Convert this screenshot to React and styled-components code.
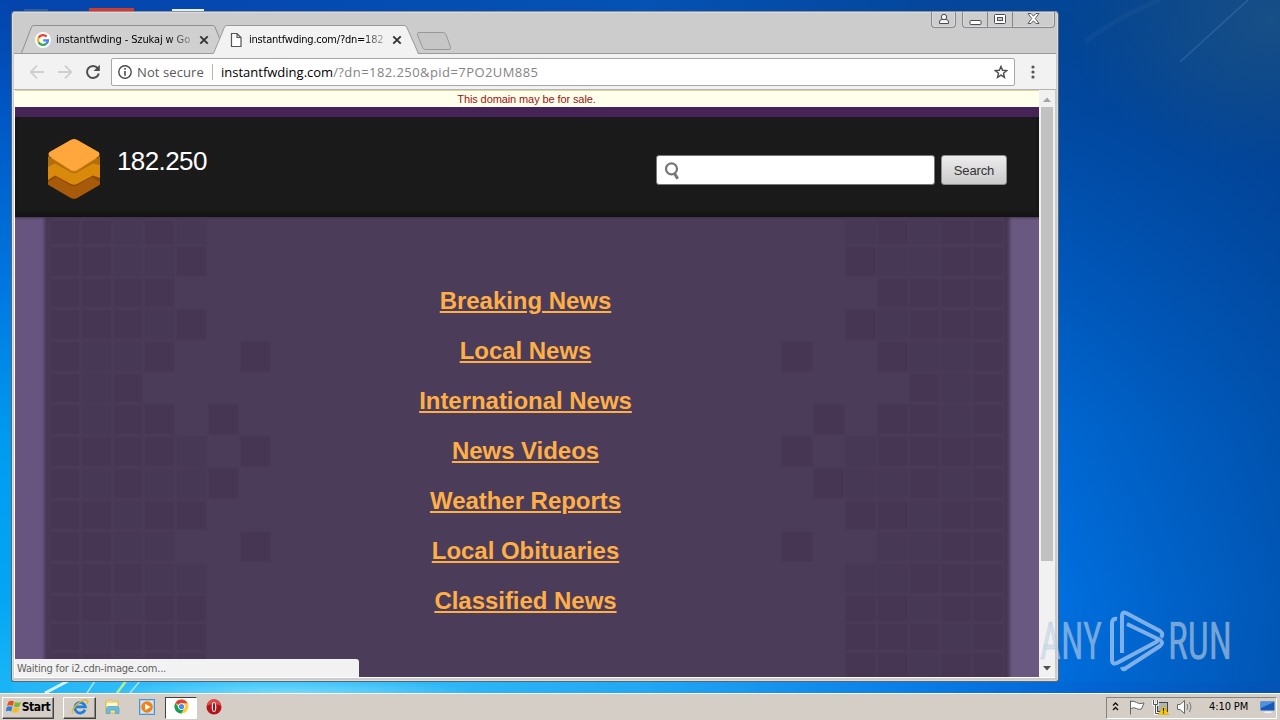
import React from 'react'
import styled, { createGlobalStyle } from 'styled-components';

const GlobalStyle = createGlobalStyle`
    * {
        box-sizing: border-box;
    }
    body {
        margin: 0;
        overflow: hidden;
    }
    svg {
        display: block;
        flex-shrink: 0;
    }
`

const tahoma = '"DejaVu Sans Condensed", "DejaVu Sans", sans-serif'
const arial = '"Liberation Sans", Arial, sans-serif'

const Desktop = styled.div`
    position: relative;
    display: flex;
    flex-direction: column;
    width: 1280px;
    height: 720px;
    overflow: hidden;
    font-family: ${tahoma};
    font-stretch: condensed;
    background:
        linear-gradient(to bottom, #0444ad 0, #0058c4 120px, #0078e0 290px, #009bf0 440px, #04a6f4 600px, #18b4f6 682px) 0 0 / 12px 693px no-repeat,
        linear-gradient(to right, #22b4f6 0, #38c4fa 20%, #22a8f4 50%, #0a80e8 70%, #0264d2 85%, #0353b4 100%) 0 682px / 1280px 11px no-repeat,
        linear-gradient(to right, #0444ad 0, #0452b4 50%, #04469a 75%, #04469a00 90%) 0 0 / 1280px 11px no-repeat,
        radial-gradient(ellipse 200px 150px at 1270px 20px, #174f86 0, #174f8600 100%),
        linear-gradient(to left, #02388270 0, #02388200 220px),
        linear-gradient(to bottom, #034592 0, #0148a0 110px, #0056b8 260px, #0066d0 430px, #006fde 600px, #006cda 693px);
`

const Wallpaper = styled.svg`
    position: absolute;
    left: 0;
    top: 0;
`

const Main = styled.main`
    position: relative;
    height: 693px;
    padding: 11px 0 0 11px;
`

const Window = styled.section`
    position: relative;
    display: flex;
    flex-direction: column;
    width: 1048px;
    height: 671px;
    padding: 0 3px 3px;
    border: 1px solid #5c6470;
    border-top-color: #8e9299;
    border-radius: 4px 4px 3px 3px;
    background: #ccc;
    box-shadow: inset 0 0 0 1px #dcdcdc;
`

const TitleBar = styled.div`
    display: flex;
    justify-content: space-between;
    height: 41px;
    padding-left: 6px;
`

const Tabs = styled.div`
    display: flex;
    padding-top: 13px;
`

const Tab = styled.div`
    position: relative;
    display: flex;
    align-items: center;
    width: ${p => p.$active ? 206 : 201}px;
    height: 29px;
    margin-left: ${p => p.$active ? -9 : 0}px;
    padding-left: ${p => p.$active ? 15 : 14}px;
    z-index: ${p => p.$active ? 1 : 0};
    > * {
        position: relative;
    }
`

const TabShape = styled.svg`
    && {
        position: absolute;
        left: 0;
        top: 0;
    }
`

const TabTitle = styled.span`
    width: 135px;
    margin: 0 8px 0 5px;
    overflow: hidden;
    white-space: nowrap;
    font-size: 11px;
    line-height: 16px;
    letter-spacing: ${p => p.$spacing}px;
    color: #000;
    mask-image: linear-gradient(to right, #000 112px, #0004 135px);
`

const NewTab = styled.svg`
    margin: 7px 0 0 -3px;
`

const Controls = styled.div`
    display: flex;
    align-items: flex-start;
`

const ControlGroup = styled.div`
    display: flex;
    height: 16px;
    margin-right: ${p => p.$gap || 0}px;
    border: 1px solid #85888c;
    border-top: 0;
    border-radius: 0 0 4px 4px;
    background: #cdcdcd;
    box-shadow: inset 0 0 0 1px #dadada;
`

const Control = styled.span`
    display: grid;
    place-items: center;
    width: ${p => p.$width}px;
    padding-bottom: 2px;
    & + & {
        border-left: 1px solid #85888c;
    }
`

const Toolbar = styled.div`
    display: flex;
    align-items: center;
    height: 38px;
    margin: 0 -1px 0 -1px;
    padding: 0 9px 0 15px;
    border-top: 1px solid #9a9a9a;
    border-bottom: 1px solid #b5b4ae;
    background: #f2f2f2;
`

const NavIcons = styled.div`
    display: flex;
    gap: 12px;
    width: 82px;
`

const AddressBar = styled.div`
    display: flex;
    align-items: center;
    width: 904px;
    height: 28px;
    padding: 0 6px;
    border: 1px solid #a5a7ab;
    border-radius: 2px;
    background: #fff;
    font-family: "Open Sans", "Noto Sans", sans-serif;
    font-size: 13px;
    font-stretch: normal;
    color: #000;
`

const Secure = styled.span`
    width: 76px;
    margin-left: 5px;
    border-right: 1px solid #b4b4b4;
    line-height: 16px;
    letter-spacing: .1px;
    white-space: nowrap;
    color: #5a5a5a;
`

const Url = styled.span`
    flex: 1;
    padding-left: 8px;
    span {
        letter-spacing: .43px;
        color: #848484;
    }
`

const MenuButton = styled.svg`
    margin-left: 16px;
`

const Viewport = styled.div`
    position: relative;
    display: flex;
    height: 588px;
    margin-left: -1px;
    border-bottom: 1px solid #fff;
    border-left: 1px solid #fff;
    background: #f1f1f1;
`

const Page = styled.div`
    flex-shrink: 0;
    width: 1024px;
    padding-top: 1px;
    font-family: ${arial};
    font-stretch: normal;
`

const Sale = styled.div`
    height: 16px;
    padding-right: 1px;
    background: #ffffec;
    box-shadow: 0 -1px 0 #d9d2ab;
    font-size: 11px;
    line-height: 17px;
    text-align: center;
    letter-spacing: -.1px;
    color: #a01212;
`

const Header = styled.header`
    display: flex;
    height: 110px;
    padding: 21px 32px 0;
    border-top: 10px solid #472458;
    background: repeating-linear-gradient(90deg, #1a1a1a 0 3px, #1c1c1c 3px 4px);
    box-shadow: inset 0 -4px 4px #131313;
`

const Domain = styled.h1`
    flex: 1;
    margin: 8px 0 0 16px;
    font-size: 26px;
    font-weight: 400;
    line-height: 30px;
    letter-spacing: -.6px;
    color: #fff;
`

const SearchForm = styled.div`
    display: flex;
    gap: 6px;
    padding-top: 17px;
`

const SearchField = styled.div`
    display: flex;
    align-items: center;
    width: 279px;
    height: 30px;
    padding: 2px 0 0 8px;
    border: 1px solid #777;
    border-radius: 3px;
    background: #fff;
`

const SearchButton = styled.button`
    width: 66px;
    height: 30px;
    padding: 0;
    border: 1px solid #8d8d8d;
    border-radius: 3px;
    background: linear-gradient(#ececec, #cbcbcb);
    font-family: ${arial};
    font-size: 13px;
    letter-spacing: -.15px;
    color: #333;
`

const Content = styled.div`
    display: flex;
    justify-content: space-between;
    height: 460px;
    padding: 4px 36px 0 35px;
    overflow: hidden;
    background:
        linear-gradient(#3d3048aa, #4b3c5900) 0 0 / 100% 3px no-repeat,
        linear-gradient(90deg, #67557f 0 27px, #4a3b58 31px, #453553 33px, #4b3c59 37px 987px, #453553 991px, #4a3b58 993px, #69587f 997px);
`

const Mosaic = styled.div`
    display: grid;
    grid-template-columns: repeat(7, 28.8px);
    grid-template-rows: 23px repeat(11, 28.7px) 25.5px 25.5px 28px;
    gap: 3px;
    transform: ${p => p.$mirrored ? 'scaleX(-1)' : 'none'};
    i {
        background: #463653;
        box-shadow: 0 0 0 1.5px #4a3a57;
    }
    i.off {
        visibility: hidden;
    }
    i.dim {
        background: #473855;
    }
`

const Links = styled.nav`
    display: flex;
    flex-direction: column;
    align-items: center;
    gap: 22px;
    padding: 66px 2px 0 0;
    a {
        font-size: 24px;
        font-weight: 700;
        line-height: 28px;
        letter-spacing: -.04px;
        text-decoration: underline;
        text-decoration-thickness: 2px;
        text-underline-offset: 2px;
        white-space: nowrap;
        color: #ffaf46;
    }
`

const Scrollbar = styled.div`
    display: flex;
    flex-direction: column;
    justify-content: space-between;
    align-items: center;
    width: 16px;
    padding: 7px 0 6px 0;
`

const Thumb = styled.div`
    width: 12px;
    height: 454px;
    margin: 5px 0 auto 0;
    background: #c1c1c1;
`

const Status = styled.div`
    position: absolute;
    left: 0;
    bottom: 0;
    width: 344px;
    height: 18px;
    padding-left: 2px;
    border-radius: 0 3px 0 0;
    background: #f2f2f2;
    font-size: 11px;
    line-height: 19px;
    letter-spacing: -.2px;
    color: #5f5f5f;
`

const Watermark = styled.svg`
    position: absolute;
    left: 1036px;
    top: 606px;
`

const Taskbar = styled.footer`
    position: relative;
    display: flex;
    align-items: center;
    height: 27px;
    padding: 1px 3px 0 2px;
    border-top: 1px solid #fff;
    background: #d5cec6;
    font-size: 11px;
    color: #000;
`

const TaskButton = styled.span`
    display: flex;
    align-items: center;
    justify-content: center;
    width: ${p => p.$width || 33}px;
    height: 22px;
    margin-right: ${p => p.$gap || 0}px;
    padding-bottom: 2px;
    border: ${p => p.$flat ? '0' : '1px solid'};
    border-color: ${p => p.$pressed ? '#404040 #fff #fff #404040' : '#fff #404040 #404040 #fff'};
    background: ${p => p.$pressed ? '#fff' : 'transparent'};
    box-shadow: ${p => p.$flat || p.$pressed ? 'none' : 'inset -1px -1px 0 #8a8680'};
    font-size: 12px;
    font-weight: 700;
    letter-spacing: -.4px;
`

const Tray = styled.div`
    display: flex;
    align-items: center;
    width: 171px;
    height: 22px;
    margin-left: auto;
    padding: 0 0 2px 5px;
    border: 1px solid;
    border-color: #85817b #fff #fff #85817b;
`

const Clock = styled.span`
    width: 41px;
    margin: 0 10px 0 16px;
    white-space: nowrap;
    letter-spacing: -.1px;
`

// rows of the left side, the right side is mirrored. # dark cell, + lighter cell
const cells = [
    '##+#+..',
    '##++#..',
    '####...',
    '###+#..',
    '#++#..#',
    '#+#....',
    '#+##.#.',
    '####+.#',
    '#+#++#.',
    '##+##..',
    '##++..#',
    '###++..',
    '##+##..',
    '#+###..',
    '##+##..'
]

const links = [
    'Breaking News',
    'Local News',
    'International News',
    'News Videos',
    'Weather Reports',
    'Local Obituaries',
    'Classified News'
]

const cellClass = { '#': '', '+': 'dim', '.': 'off' }

function Squares({ mirrored }) {
    return (
        <Mosaic $mirrored={mirrored}>
            {cells.join('').split('').map((c, id) => <i key={id} className={cellClass[c]}></i>)}
        </Mosaic>
    )
}

function CloseIcon() {
    return (
        <svg width="10" height="10" viewBox="0 0 10 10">
            <path d="M1.3 1.3l7.4 7.4M8.7 1.3L1.3 8.7" stroke="#333" strokeWidth="1.9" />
        </svg>
    )
}

function GoogleIcon() {
    return (
        <svg width="16" height="16" viewBox="0 0 16 16">
            <circle cx="8" cy="8" r="8" fill="#fff" />
            <g fill="none" strokeWidth="2.3">
                <path d="M11.6 4.6A5 5 0 0 0 3.6 5.7" stroke="#ea4335" />
                <path d="M3.6 5.7a5 5 0 0 0 0 4.6" stroke="#fbbc05" />
                <path d="M3.6 10.3a5 5 0 0 0 7.7 1.4" stroke="#34a853" />
                <path d="M11.3 11.7A5 5 0 0 0 13 8.3H8.2" stroke="#4285f4" />
            </g>
        </svg>
    )
}

function ChromeIcon() {
    return (
        <svg width="15" height="15" viewBox="0 0 16 16">
            <circle cx="8" cy="8" r="7.5" fill="#ffcd40" />
            <path d="M8 8L1.5 4.2A7.5 7.5 0 0 1 14.6 4.5H8z" fill="#dd4437" />
            <path d="M1.5 4.2A7.5 7.5 0 0 0 7.8 15.5L11 9.8 8 8 5 9.6z" fill="#12a05c" />
            <circle cx="8" cy="8" r="3.6" fill="#fff" />
            <circle cx="8" cy="8" r="2.8" fill="#4a8af4" />
        </svg>
    )
}

function BrowserTabs() {
    return (
        <Tabs>
            <Tab>
                <TabShape width="201" height="29">
                    <path d="M.5 28L10.500 2Q11.200 .5 13 .5H191.500Q193.300 .5 194 2L200 17L196 28z" fill="#d0d0d0" />
                    <path d="M.5 28L10.500 2Q11.200 .5 13 .5H191.500Q193.300 .5 194 2L200 17" fill="none" stroke="#8f8f8f" />
                </TabShape>
                <GoogleIcon />
                <TabTitle $spacing={-.12}>instantfwding - Szukaj w Go</TabTitle>
                <CloseIcon />
            </Tab>
            <Tab $active>
                <TabShape width="206" height="29">
                    <path d="M0 29L11.500 2Q12.200 .5 14 .5H191Q193 .5 193.700 2L205 29z" fill="#f2f2f2" />
                    <path d="M.5 28.500L11.500 2Q12.200 .5 14 .5H191Q193 .5 193.700 2L205.500 28.500" fill="none" stroke="#9a9a9a" />
                </TabShape>
                <svg width="16" height="16" viewBox="0 0 16 16">
                    <path d="M3.500 1.500h5.500l4 4v9H3.500z M9 1.500v4h4" fill="#fff" stroke="#555" strokeWidth="1.200" />
                </svg>
                <TabTitle $spacing={-.22}>instantfwding.com/?dn=182</TabTitle>
                <CloseIcon />
            </Tab>
            <NewTab width="38" height="18" viewBox="0 0 38 18">
                <path d="M3 .5H27Q29 .5 30 2.500L34.500 15Q35 17.500 33 17.500H9.500Q7.500 17.500 6.500 15.500L1.500 3Q1 .5 3 .5z" fill="#c6c6c6" stroke="#989898" />
            </NewTab>
        </Tabs>
    )
}

function WindowControls() {
    return (
        <Controls>
            <ControlGroup $gap={6}>
                <Control $width={23}>
                    <svg width="12" height="12" viewBox="0 0 12 12" fill="#f4f4f4" stroke="#4a4d55">
                        <path d="M1.500 10.500V9Q1.500 6.500 4 6.500H8Q10.500 6.500 10.500 9V10.500z" />
                        <circle cx="6" cy="4" r="2.700" />
                    </svg>
                </Control>
            </ControlGroup>
            <ControlGroup>
                <Control $width={24}>
                    <svg width="13" height="12" viewBox="0 0 13 12">
                        <rect x="1" y="7.500" width="11" height="4" rx="1" fill="#fff" stroke="#4a4d55" />
                    </svg>
                </Control>
                <Control $width={25}>
                    <svg width="12" height="10" viewBox="0 0 12 10" fill="#fff" stroke="#4a4d55">
                        <rect x=".5" y=".5" width="11" height="9" rx="1" />
                        <rect x="3.500" y="3.500" width="5" height="3" fill="#ccc" />
                    </svg>
                </Control>
                <Control $width={42}>
                    <svg width="13" height="11" viewBox="0 0 13 11">
                        <path d="M1 .5h3l2.500 2.700L9 .5h3L8.300 5.500l3.700 5H9L6.500 7.800 4 10.500H1l3.700-5z" fill="#fff" stroke="#4a4d55" strokeWidth=".9" />
                    </svg>
                </Control>
            </ControlGroup>
        </Controls>
    )
}

function BrowserToolbar() {
    return (
        <Toolbar>
            <NavIcons>
                <svg width="16" height="16" viewBox="0 0 16 16" fill="none" stroke="#cfcfcf" strokeWidth="1.800">
                    <path d="M15 8H2M8 1.700L1.700 8 8 14.300" />
                </svg>
                <svg width="16" height="16" viewBox="0 0 16 16" fill="none" stroke="#cfcfcf" strokeWidth="1.800">
                    <path d="M1 8h13M8 1.700L14.300 8 8 14.300" />
                </svg>
                <svg width="16" height="16" viewBox="0 0 16 16">
                    <path d="M12.700 4.200A6 6 0 1 0 13.800 9.500" fill="none" stroke="#4d4d4d" strokeWidth="2" />
                    <path d="M14.800 .8V7H8.600z" fill="#4d4d4d" />
                </svg>
            </NavIcons>
            <AddressBar>
                <svg width="14" height="14" viewBox="0 0 14 14">
                    <circle cx="7" cy="7" r="6.200" fill="none" stroke="#4a4a4a" strokeWidth="1.400" />
                    <path d="M7 3v1.700M7 6v4.700" stroke="#4a4a4a" strokeWidth="1.600" />
                </svg>
                <Secure>Not secure</Secure>
                <Url>instantfwding.com<span>/?dn=182.250&amp;pid=7PO2UM885</span></Url>
                <svg width="14" height="14" viewBox="0 0 14 14">
                    <path d="M7 1.400l1.600 3.900 4.100.3-3.200 2.700 1 4.100L7 10.200l-3.500 2.200 1-4.100L1.300 5.600l4.100-.3z" fill="none" stroke="#4d4d4d" strokeWidth="1.400" />
                </svg>
            </AddressBar>
            <MenuButton width="4" height="14" fill="#555">
                <circle cx="2" cy="2" r="1.600" />
                <circle cx="2" cy="7" r="1.600" />
                <circle cx="2" cy="12" r="1.600" />
            </MenuButton>
        </Toolbar>
    )
}

function Logo() {
    return (
        <svg width="54" height="62" viewBox="0 0 54 62">
            <path d="M1 32L27 18 53 32V45Q53 46.500 51.500 47.500L30 60Q27 61.500 24 60L2.500 47.500Q1 46.500 1 45z" fill="#8f4a06" />
            <path d="M1 44L9 39 24 47.500Q27 49 30 47.500L45 39 53 44V46.500L30 60Q27 61.500 24 60L1 46.500z" fill="#a65a0a" />
            <path d="M1 20H53V40L46 37.500 30 46Q27 47.500 24 46L8 37.500 1 42z" fill="#d98a0b" />
            <path d="M1 18L24 33Q27 34.500 30 33L53 18V27L46 25.500 30 34.500Q27 36 24 34.500L8 25.500 1 29z" fill="#b06f0c" />
            <path d="M2.500 14L24 1.700Q27 .3 30 1.700L51.500 14Q53.500 16 51.500 18.500L30 32Q27 33.500 24 32L2.500 18.500Q.5 16 2.500 14z" fill="#ffa63d" />
        </svg>
    )
}

function Site() {
    return (
        <Page>
            <Sale>This domain may be for sale.</Sale>
            <Header>
                <Logo />
                <Domain>182.250</Domain>
                <SearchForm>
                    <SearchField>
                        <svg width="15" height="18" viewBox="0 0 15 18" fill="none" stroke="#777">
                            <circle cx="6.500" cy="6.800" r="5.500" strokeWidth="2.200" />
                            <path d="M9.500 11.500L12.700 16.700" strokeWidth="3" />
                        </svg>
                    </SearchField>
                    <SearchButton>Search</SearchButton>
                </SearchForm>
            </Header>
            <Content>
                <Squares />
                <Links>
                    {links.map(link => <a key={link}>{link}</a>)}
                </Links>
                <Squares mirrored />
            </Content>
        </Page>
    )
}

function StartBar() {
    return (
        <Taskbar>
            <TaskButton $width={52} $gap={9}>
                <svg width="16" height="16" viewBox="0 0 16 16">
                    <path d="M2.500 2.500Q5.500 .8 8 2.500L6.800 7Q4 5.500 1 7z" fill="#e8501c" />
                    <path d="M9 3Q12 4.500 15 2.800L13.500 7.500Q11 9 7.800 7.500z" fill="#7cb82f" />
                    <path d="M.8 8Q4 6.500 6.500 8L5.200 12.500Q3 11-.3 12.500z" fill="#2f7fd6" />
                    <path d="M7.500 8.500Q10.500 10 13.300 8.500L12 13Q9.500 14.500 6.200 13z" fill="#fbb91f" />
                </svg>
                Start
            </TaskButton>
            <TaskButton>
                <svg width="18" height="18" viewBox="0 0 18 18" fill="none">
                    <path d="M14 11.800A5.300 5.300 0 1 1 14.300 8.800H5" stroke="#1f7fdc" strokeWidth="2.800" />
                    <path d="M1.500 15.500C-.5 11 11 0 16.300 2.500Q17.500 3.500 16 6" stroke="#e9b62c" strokeWidth="1.400" />
                </svg>
            </TaskButton>
            <TaskButton $flat $gap={1}>
                <svg width="17" height="17" viewBox="0 0 17 17">
                    <path d="M1.500 3.500L7 1.500 8 3H14.500V15H1.500z" fill="#f3dc83" stroke="#d2b55b" strokeWidth=".7" />
                    <path d="M3 5H13V8H3z" fill="#fdf8d6" />
                    <path d="M2.500 15.500V11Q2.500 8.500 5 8.500H12.500Q15 8.500 15 11V15.500H11.500V12H6V15.500z" fill="#68bde6" stroke="#4797bd" strokeWidth=".6" />
                </svg>
            </TaskButton>
            <TaskButton $flat $gap={2}>
                <svg width="16" height="16" viewBox="0 0 16 16">
                    <rect x=".5" y=".5" width="15" height="15" fill="#a9cdee" stroke="#4d94d3" />
                    <rect x="2" y="2" width="12" height="12" fill="#d5e6f6" />
                    <circle cx="8" cy="8" r="5.800" fill="#f28116" />
                    <path d="M6.200 4.700L11.500 8l-5.300 3.300z" fill="#fff" />
                </svg>
            </TaskButton>
            <TaskButton $pressed $width={32}><ChromeIcon /></TaskButton>
            <TaskButton $flat>
                <svg width="16" height="16" viewBox="0 0 16 16">
                    <circle cx="8" cy="8" r="7.500" fill="#b4141b" />
                    <path d="M1 7A7 7 0 0 1 15 7Q8 3 1 7z" fill="#dc4b4b" />
                    <ellipse cx="8" cy="8" rx="2.300" ry="5" fill="#f3e9e6" />
                    <ellipse cx="8" cy="8" rx="1" ry="4.200" fill="#8c0d12" />
                </svg>
            </TaskButton>
            <Tray>
                <svg width="7" height="12" viewBox="0 0 7 12" fill="none" stroke="#111" strokeWidth="1.400">
                    <path d="M1 4.500L3.500 2 6 4.500M1 9L3.500 6.500 6 9" />
                </svg>
                <svg width="17" height="16" viewBox="0 0 17 16" style={{ marginLeft: 9 }}>
                    <path d="M2.500 1.500v14M3 2.500Q6 1.500 8.500 3.500T16 4L13.500 10Q11 11 8.500 9.500T3 9.500" fill="#fff" stroke="#666" />
                </svg>
                <svg width="17" height="16" viewBox="0 0 17 16" style={{ marginLeft: 7 }}>
                    <rect x="5.500" y="3.500" width="10" height="9" fill="#aeb6b6" stroke="#444" />
                    <path d="M1.500 1v4.500h4V1M3.500 5.500V14.500H10" fill="none" stroke="#fff" strokeWidth="2.600" />
                    <path d="M1.500 1v4.500h4V1M3.500 5.500V14.500H7" fill="none" stroke="#555" />
                    <path d="M11.500 6.500L16.500 15.500H6.500z" fill="#fc0" stroke="#c90" strokeWidth=".5" />
                    <path d="M11.500 9v3.500M11.500 13.300v1.200" stroke="#222" strokeWidth="1.200" />
                </svg>
                <svg width="17" height="16" viewBox="0 0 17 16" style={{ marginLeft: 7 }} fill="none" stroke="#666">
                    <path d="M1.500 5.500H4L8.500 1.500V14.500L4 10.500H1.500z" fill="#fff" />
                    <path d="M11 5Q12.500 8 11 11M13.500 3Q16.500 8 13.500 13" stroke="#777" />
                </svg>
                <Clock>4:10 PM</Clock>
                <svg width="16" height="14" viewBox="0 0 16 14">
                    <rect x=".5" y="1.500" width="14" height="9" rx="1" fill="#1858b6" stroke="#6f96c4" />
                    <path d="M1 2H14L1 8z" fill="#4d92e2" />
                    <path d="M5 11.500h6l1 1.500H4z" fill="#eef2f6" />
                </svg>
            </Tray>
        </Taskbar>
    )
}

function App() {
    return (
        <Desktop>
            <GlobalStyle />
            <Wallpaper width="1280" height="693" fill="none">
                <defs>
                    <radialGradient id="glow">
                        <stop offset="0" stopColor="#8de3fb" stopOpacity=".7" />
                        <stop offset="1" stopColor="#8de3fb" stopOpacity="0" />
                    </radialGradient>
                </defs>
                <path d="M24 10H48" stroke="#4f74b3" strokeWidth="1" />
                <path d="M89 9.500H134" stroke="#d6392c" strokeWidth="3" />
                <path d="M172 10H204" stroke="#e6eff4" strokeWidth="2" />
                <path d="M1180 62L1248 0" stroke="#4e83b8" strokeOpacity=".4" strokeWidth="1.500" />
                <path d="M1085 42Q1115 18 1160 0" stroke="#4e83b8" strokeOpacity=".1" strokeWidth="5" />
                <path d="M45 693L68 681" stroke="#d4f4ff" strokeWidth="3" />
                <path d="M87 693L95 681M130 693L140 681" stroke="#a5e9ff" strokeWidth="1.500" />
                <path d="M117 693L126 681" stroke="#b5ee8e" strokeWidth="2.500" />
                <ellipse cx="290" cy="693" rx="190" ry="14" fill="url(#glow)" />
            </Wallpaper>
            <Main>
                <Window>
                    <TitleBar>
                        <BrowserTabs />
                        <WindowControls />
                    </TitleBar>
                    <BrowserToolbar />
                    <Viewport>
                        <Site />
                        <Scrollbar>
                            <svg width="8" height="5"><path d="M0 5L4 .5 8 5z" fill="#a3a3a3" /></svg>
                            <Thumb />
                            <svg width="8" height="5"><path d="M0 0L4 4.500 8 0z" fill="#505050" /></svg>
                        </Scrollbar>
                        <Status>Waiting for i2.cdn-image.com...</Status>
                    </Viewport>
                </Window>
            </Main>
            <StartBar />
            <Watermark width="240" height="80" fill="#c3d6ea" fillOpacity=".62" stroke="#8fa9c4" strokeOpacity=".25" fontFamily="Roboto, sans-serif" fontSize="52">
                <text x="4" y="53" textLength="62" lengthAdjust="spacingAndGlyphs">ANY</text>
                <text x="132" y="53" textLength="64" lengthAdjust="spacingAndGlyphs">RUN</text>
                <g fill="none" stroke="#b4d0f2" strokeOpacity=".7" strokeWidth="4" strokeLinejoin="round">
                    <path d="M81 13Q76 12 76 18V54Q76 59 81 57L122 35" />
                    <path d="M86 47V10Q86 5 90 7L124 25Q128 28 125 31.500" />
                    <path d="M91 18L124 34Q128 37 124 40L90 62Q87 65 86 61" />
                </g>
            </Watermark>
        </Desktop>
    )
}

export default App
